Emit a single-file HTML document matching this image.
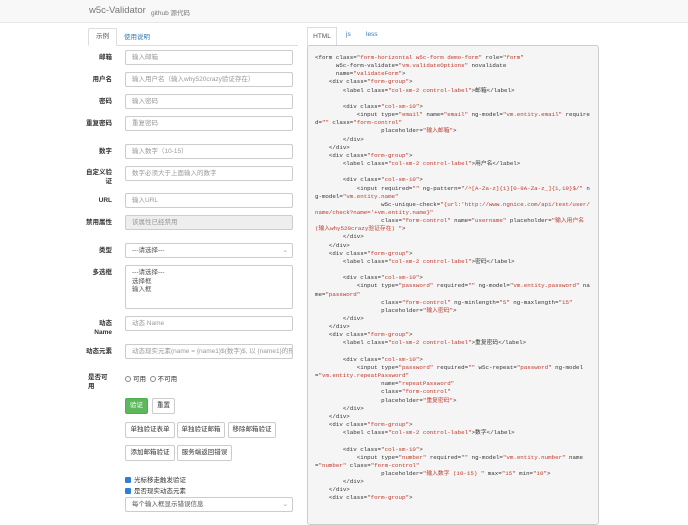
<!DOCTYPE html>
<html><head><meta charset="utf-8"><style>
*{box-sizing:border-box;margin:0;padding:0}
body{width:688px;height:512px;overflow:hidden;background:#fff;font-family:"Liberation Sans","Noto Sans CJK SC",sans-serif;color:#333;position:relative}
.nav{position:absolute;left:0;top:0;width:688px;height:23px;background:#f8f8f8;border-bottom:1px solid #e7e7e7}
.a{position:absolute}
.lbl{position:absolute;width:40px;left:72px;text-align:right;font-size:6.5px;font-weight:bold;line-height:9px}
.in{position:absolute;left:125px;width:168px;height:15px;border:1px solid #ccc;border-radius:2px;font-size:6.5px;color:#999;padding:0 0 0 6px;line-height:14px;white-space:nowrap;overflow:hidden}
.btn{position:absolute;height:16px;border:1px solid #ccc;border-radius:2px;font-size:6.5px;line-height:14px;text-align:center;color:#333;background:#fff}
pre{position:absolute;left:307px;top:45px;width:292px;height:480px;background:#f5f5f5;border:1px solid #ccc;border-radius:3px;padding:8px 0 0 7px;font-family:"Liberation Mono","Noto Sans CJK SC",monospace;font-size:5.8px;line-height:8.15px;color:#333;white-space:pre;overflow:hidden}
pre s{text-decoration:none;color:#c0392b}
.cb{display:inline-block;width:6px;height:6px;background:#2f7fd8;border-radius:1px;vertical-align:middle;margin-right:3px}
.rd{display:inline-block;width:6px;height:6px;border:1px solid #888;border-radius:50%;vertical-align:middle;margin-right:2px}
</style></head><body>
<div class="nav"></div>
<div class="a" style="left:89px;top:5px;font-size:9.5px;color:#777">w5c-Validator</div>
<div class="a" style="left:151px;top:7px;font-size:6.5px;color:#777">github 源代码</div>

<div class="a" style="left:88px;top:45px;width:210px;border-top:1px solid #ddd"></div>
<div class="a" style="left:88px;top:28px;width:29px;height:18px;border:1px solid #ddd;border-bottom:1px solid #fff;background:#fff;font-size:6.5px;text-align:center;line-height:16px;color:#555;border-radius:2px 2px 0 0">示例</div>
<div class="a" style="left:124px;top:31px;font-size:6.5px;color:#337ab7">使用说明</div>

<div class="lbl" style="top:53px">邮箱</div><div class="in" style="top:50px">输入邮箱</div>
<div class="lbl" style="top:75px">用户名</div><div class="in" style="top:72px">输入用户名（输入why520crazy验证存在）</div>
<div class="lbl" style="top:97px">密码</div><div class="in" style="top:94px">输入密码</div>
<div class="lbl" style="top:119px;left:80px;width:32px">重复密码</div><div class="in" style="top:116px">重复密码</div>
<div class="lbl" style="top:147px">数字</div><div class="in" style="top:144px">输入数字（10-15）</div>
<div class="lbl" style="top:168px;left:80px;width:32px">自定义验证</div><div class="in" style="top:166px">数字必须大于上面输入的数字</div>
<div class="lbl" style="top:196px">URL</div><div class="in" style="top:193px">输入URL</div>
<div class="lbl" style="top:218px;left:80px;width:32px">禁用属性</div><div class="in" style="top:215px;background:#eee">该属性已经禁用</div>
<div class="lbl" style="top:246px">类型</div><div class="in" style="top:243px;color:#555">---请选择---<span style="position:absolute;right:4px;color:#999">⌄</span></div>
<div class="lbl" style="top:268px">多选框</div><div class="in" style="top:265px;height:44px;color:#555;line-height:8.5px;padding-top:3px">---请选择---<br>选择框<br>输入框</div>
<div class="lbl" style="top:319px;left:80px;width:32px">动态 Name</div><div class="in" style="top:316px">动态 Name</div>
<div class="lbl" style="top:347px;left:80px;width:32px">动态元素</div><div class="in" style="top:344px">动态现实元素(name = {name1}$(数字)$, 以 {name1}的形</div>
<div class="lbl" style="top:373px;left:88px;width:24px;text-align:left">是否可用</div>
<div class="a" style="top:373px;left:125px;font-size:6.5px"><span class="rd"></span>可用 &nbsp;<span class="rd"></span>不可用</div>

<div class="btn" style="left:125px;top:398px;width:23px;background:#5cb85c;border-color:#4cae4c;color:#fff">验证</div>
<div class="btn" style="left:152px;top:398px;width:23px">重置</div>
<div class="btn" style="left:125px;top:422px;width:50px">单独验证表单</div>
<div class="btn" style="left:177px;top:422px;width:48px">单独验证邮箱</div>
<div class="btn" style="left:228px;top:422px;width:48px">移除邮箱验证</div>
<div class="btn" style="left:125px;top:445px;width:50px">添加邮箱验证</div>
<div class="btn" style="left:177px;top:445px;width:55px">服务端返回错误</div>
<div class="a" style="top:474px;left:125px;font-size:6.5px"><span class="cb"></span>光标移走触发验证</div>
<div class="a" style="top:485px;left:125px;font-size:6.5px"><span class="cb"></span>是否现实动态元素</div>
<div class="in" style="top:497px;color:#555">每个输入框显示错误信息<span style="position:absolute;right:4px;color:#999">⌄</span></div>

<div class="a" style="left:307px;top:27px;width:30px;height:19px;border:1px solid #ddd;border-bottom:none;background:#fff;font-size:6.5px;text-align:center;line-height:17px;color:#555">HTML</div>
<div class="a" style="left:346px;top:31px;font-size:6.5px;color:#337ab7">js</div>
<div class="a" style="left:366px;top:31px;font-size:6.5px;color:#337ab7">less</div>

<pre>&lt;form class=<s>"form-horizontal w5c-form demo-form"</s> role=<s>"form"</s>
      w5c-form-validate=<s>"vm.validateOptions"</s> novalidate
      name=<s>"validateForm"</s>&gt;
    &lt;div class=<s>"form-group"</s>&gt;
        &lt;label class=<s>"col-sm-2 control-label"</s>&gt;邮箱&lt;/label&gt;

        &lt;div class=<s>"col-sm-10"</s>&gt;
            &lt;input type=<s>"email"</s> name=<s>"email"</s> ng-model=<s>"vm.entity.email"</s> require
d=<s>""</s> class=<s>"form-control"</s>
                   placeholder=<s>"输入邮箱"</s>&gt;
        &lt;/div&gt;
    &lt;/div&gt;
    &lt;div class=<s>"form-group"</s>&gt;
        &lt;label class=<s>"col-sm-2 control-label"</s>&gt;用户名&lt;/label&gt;

        &lt;div class=<s>"col-sm-10"</s>&gt;
            &lt;input required=<s>""</s> ng-pattern=<s>"/^[A-Za-z]{1}[0-9A-Za-z_]{1,19}$/"</s> n
g-model=<s>"vm.entity.name"</s>
                   w5c-unique-check=<s>"{url:'http://www.ngnice.com/api/test/user/</s>
<s>name/check?name='+vm.entity.name}"</s>
                   class=<s>"form-control"</s> name=<s>"username"</s> placeholder=<s>"输入用户名</s>
<s>(输入why520crazy验证存在) "</s>&gt;
        &lt;/div&gt;
    &lt;/div&gt;
    &lt;div class=<s>"form-group"</s>&gt;
        &lt;label class=<s>"col-sm-2 control-label"</s>&gt;密码&lt;/label&gt;

        &lt;div class=<s>"col-sm-10"</s>&gt;
            &lt;input type=<s>"password"</s> required=<s>""</s> ng-model=<s>"vm.entity.password"</s> na
me=<s>"password"</s>
                   class=<s>"form-control"</s> ng-minlength=<s>"5"</s> ng-maxlength=<s>"15"</s>
                   placeholder=<s>"输入密码"</s>&gt;
        &lt;/div&gt;
    &lt;/div&gt;
    &lt;div class=<s>"form-group"</s>&gt;
        &lt;label class=<s>"col-sm-2 control-label"</s>&gt;重复密码&lt;/label&gt;

        &lt;div class=<s>"col-sm-10"</s>&gt;
            &lt;input type=<s>"password"</s> required=<s>""</s> w5c-repeat=<s>"password"</s> ng-model
=<s>"vm.entity.repeatPassword"</s>
                   name=<s>"repeatPassword"</s>
                   class=<s>"form-control"</s>
                   placeholder=<s>"重复密码"</s>&gt;
        &lt;/div&gt;
    &lt;/div&gt;
    &lt;div class=<s>"form-group"</s>&gt;
        &lt;label class=<s>"col-sm-2 control-label"</s>&gt;数字&lt;/label&gt;

        &lt;div class=<s>"col-sm-10"</s>&gt;
            &lt;input type=<s>"number"</s> required=<s>""</s> ng-model=<s>"vm.entity.number"</s> name
=<s>"number"</s> class=<s>"form-control"</s>
                   placeholder=<s>"输入数字 (10-15) "</s> max=<s>"15"</s> min=<s>"10"</s>&gt;
        &lt;/div&gt;
    &lt;/div&gt;
    &lt;div class=<s>"form-group"</s>&gt;
</pre>
</body></html>
